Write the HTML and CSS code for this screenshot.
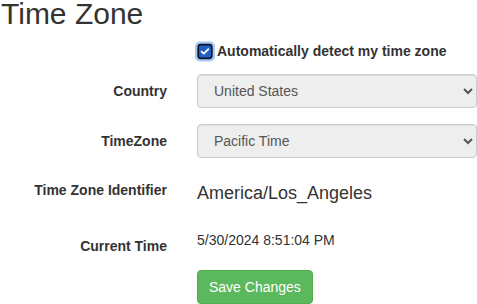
FILE: index.html
```html
<!DOCTYPE html>
<html lang="en">
<head>
<meta charset="utf-8">
<title>Time Zone</title>
<link rel="stylesheet" href="styles.css">
</head>
<body>
<h2 class="page-title">Time Zone</h2>
<form class="tz-form">
  <div class="row row-check">
    <div class="col-label"></div>
    <label class="check">
      <svg class="check-box" width="20" height="21" viewBox="0 0 20 21" aria-hidden="true">
        <rect x="0" y="0.5" width="20" height="20" rx="5" fill="#a8c9f4"/>
        <rect x="3.2" y="3.7" width="13.6" height="13.6" rx="2.6" fill="#1f5fc4" stroke="#0d1526" stroke-width="1.7"/>
        <path d="M6.6 10.6 L8.8 12.7 L13.3 8.2" fill="none" stroke="#ffffff" stroke-width="1.8" stroke-linecap="round" stroke-linejoin="round"/>
      </svg>
      <span class="check-text">Automatically detect my time zone</span>
    </label>
  </div>
  <div class="row row-country">
    <label class="col-label">Country</label>
    <div class="col-field">
      <select class="form-select">
        <option>United States</option>
      </select>
    </div>
  </div>
  <div class="row row-zone">
    <label class="col-label">TimeZone</label>
    <div class="col-field">
      <select class="form-select">
        <option>Pacific Time</option>
      </select>
    </div>
  </div>
  <div class="row row-ident">
    <label class="col-label">Time Zone Identifier</label>
    <div class="col-field value-large">America/Los_Angeles</div>
  </div>
  <div class="row row-time">
    <label class="col-label">Current Time</label>
    <div class="col-field value-small">5/30/2024 8:51:04 PM</div>
  </div>
  <div class="row row-submit">
    <div class="col-label"></div>
    <div class="col-field">
      <button type="button" class="btn-save">Save Changes</button>
    </div>
  </div>
</form>
</body>
</html>
```
FILE: styles.css
```css
html, body {
  margin: 0;
  padding: 0;
  background: #ffffff;
}
body {
  width: 477px;
  height: 304px;
  overflow: hidden;
  font-family: "Liberation Sans", Arial, Helvetica, sans-serif;
  font-size: 14px;
  line-height: 20px;
  color: #333333;
}
.page-title {
  margin: 0 0 0 1px;
  font-size: 30px;
  line-height: 27px;
  font-weight: 400;
  color: #333333;
}
.tz-form {
  display: flex;
  flex-direction: column;
}
.row {
  display: grid;
  grid-template-columns: 167px 1fr;
  column-gap: 30px;
  align-items: start;
}
.col-label {
  text-align: right;
  font-weight: 700;
  padding-top: 7px;
  line-height: 20px;
}
.row-check {
  margin-top: 14px;
}
.row-check .col-label {
  padding-top: 0;
}
.check {
  display: flex;
  align-items: center;
  gap: 2px;
  margin-left: -2px;
  height: 20px;
  font-weight: 700;
}
.check-box {
  flex: none;
  display: block;
}
.row-country {
  margin-top: 13px;
}
.row-zone {
  margin-top: 16px;
}
.form-select {
  display: block;
  width: 100%;
  height: 34px;
  padding: 6px 12px;
  margin: 0;
  font-family: inherit;
  font-size: 14px;
  line-height: 20px;
  color: #555555;
  background-color: #eeeeee;
  border: 1px solid #cccccc;
  border-radius: 4px;
  box-shadow: inset 0 1px 1px rgba(0, 0, 0, 0.075);
}
.row-ident {
  margin-top: 15px;
}
.value-large {
  padding-top: 7px;
  font-size: 18px;
  line-height: 26px;
}
.row-time {
  margin-top: 23px;
}
.value-small {
  padding-top: 1px;
  font-size: 14px;
  line-height: 20px;
}
.row-submit {
  margin-top: 14px;
}
.btn-save {
  display: inline-block;
  height: 34px;
  padding: 0 11px;
  margin: 0;
  font-family: inherit;
  font-size: 14px;
  line-height: 32px;
  color: #ffffff;
  background-color: #5cb85c;
  border: 1px solid #4cae4c;
  border-radius: 4px;
  cursor: pointer;
}
```
